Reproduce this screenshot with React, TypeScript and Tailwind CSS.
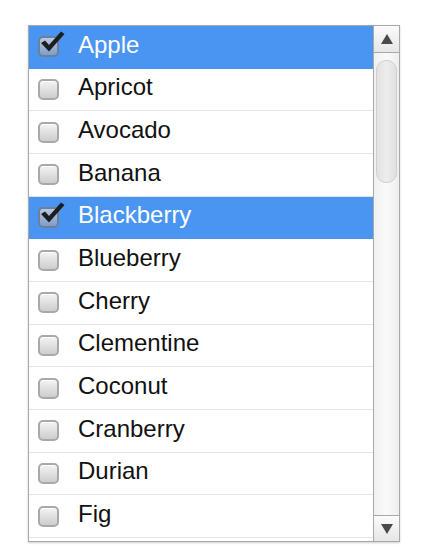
import React from "react";

const items = [
  { name: "Apple", checked: true },
  { name: "Apricot", checked: false },
  { name: "Avocado", checked: false },
  { name: "Banana", checked: false },
  { name: "Blackberry", checked: true },
  { name: "Blueberry", checked: false },
  { name: "Cherry", checked: false },
  { name: "Clementine", checked: false },
  { name: "Coconut", checked: false },
  { name: "Cranberry", checked: false },
  { name: "Durian", checked: false },
  { name: "Fig", checked: false },
];

function Box({ checked }: { checked: boolean }) {
  return (
    <div className="relative w-[21px] h-[21px] shrink-0">
      <div
        className={
          checked
            ? "absolute inset-0 rounded-[5px] border-2 border-[#6f7f96] bg-gradient-to-b from-[#b6c9e6] to-[#7f9dc9]"
            : "absolute inset-0 rounded-[5px] border-2 border-[#a9a9a9] bg-gradient-to-b from-[#f4f4f4] to-[#cdcdcd] shadow-[inset_0_1px_0_#fff]"
        }
      />
      {checked && (
        <svg
          className="absolute -top-[6px] left-[1px]"
          width="28"
          height="24"
          viewBox="0 0 28 24"
        >
          <path
            d="M2 13 L6 10.5 L10 15 L22 1.5 L25.5 4 L10 21.5 Z"
            fill="#1e1e1e"
          />
        </svg>
      )}
    </div>
  );
}

export default function App() {
  return (
    <div className="w-[428px] h-[558px] bg-white pt-[25px] pl-[28px]">
      <div className="w-[372px] h-[517px] border border-[#a8a8a8] flex shadow-[0_1px_2px_rgba(0,0,0,0.2)] bg-white">
        <div className="flex-1 overflow-hidden">
          {items.map((it) => (
            <div
              key={it.name}
              className={
                "h-[42.67px] flex items-center pl-[9px] border-b " +
                (it.checked
                  ? "bg-[#4b95f2] border-[#4b95f2] text-white"
                  : "bg-white border-[#e4e4e4] text-[#111]")
              }
            >
              <Box checked={it.checked} />
              <span
                className="ml-[19px] text-[24px] leading-none -translate-y-[2px]"
                style={{ fontFamily: '"Liberation Sans", Arial, sans-serif' }}
              >
                {it.name}
              </span>
            </div>
          ))}
        </div>
        <div className="w-[26px] border-l border-[#a8a8a8] flex flex-col bg-gradient-to-r from-[#f0f0f0] via-[#fafafa] to-[#eeeeee]">
          <div className="h-[27px] border-b border-[#a8a8a8] flex items-center justify-center bg-gradient-to-b from-[#fbfbfb] to-[#e6e6e6]">
            <svg width="12" height="10" viewBox="0 0 12 10">
              <path d="M6 0 L12 10 L0 10 Z" fill="#4a4a4a" />
            </svg>
          </div>
          <div className="flex-1 px-[2px] pt-[7px]">
            <div className="h-[123px] rounded-[10px] border border-[#cfcfcf] bg-gradient-to-r from-[#e2e2e2] via-[#ededed] to-[#e0e0e0]" />
          </div>
          <div className="h-[26px] border-t border-[#a8a8a8] flex items-center justify-center bg-gradient-to-b from-[#fbfbfb] to-[#e6e6e6]">
            <svg width="12" height="10" viewBox="0 0 12 10">
              <path d="M0 0 L12 0 L6 10 Z" fill="#4a4a4a" />
            </svg>
          </div>
        </div>
      </div>
    </div>
  );
}
